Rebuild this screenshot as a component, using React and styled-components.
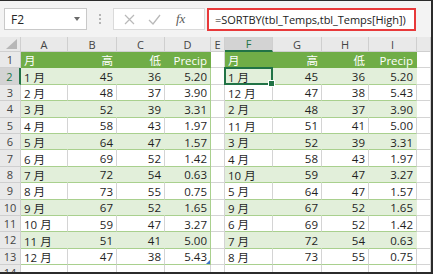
import styled, { createGlobalStyle, css } from 'styled-components';

const GlobalStyle = createGlobalStyle`
  html, body {
    margin: 0;
    padding: 0;
    background: #ffffff;
  }
  * { box-sizing: border-box; }
`;

const GREEN = '#70ad47';
const BAND = '#e2efda';
const TABLE_LINE = '#a9d08e';
const GRID = '#d4d4d4';
const HEAD_BG = '#e9e9e9';
const HEAD_LINE = '#cfcfcf';
const SELECT = '#217346';

const Frame = styled.div`
  width: 433px;
  height: 274px;
  border-top: 1px solid #2b2b2b;
  border-right: 2px solid #2b2b2b;
  border-bottom: 2px solid #2b2b2b;
  overflow: hidden;
  display: flex;
  flex-direction: column;
  font-family: "Open Sans", "Noto Sans CJK SC", sans-serif;
  background: #fff;
`;

const Toolbar = styled.div`
  height: 36px;
  flex: none;
  background: #f3f3f3;
  display: flex;
  align-items: flex-start;
  padding: 7px 0 0 4px;
`;

const NameBox = styled.div`
  width: 83px;
  height: 22px;
  background: #fff;
  border: 1px solid #c9c9c9;
  display: flex;
  align-items: center;
  justify-content: space-between;
  padding: 0 6px 0 6px;
  font-size: 12px;
  color: #262626;
`;

const Caret = styled.span`
  width: 0;
  height: 0;
  border-left: 3.5px solid transparent;
  border-right: 3.5px solid transparent;
  border-top: 4px solid #6a6a6a;
`;

const Grip = styled.div`
  width: 26px;
  height: 22px;
  display: flex;
  flex-direction: column;
  align-items: center;
  justify-content: center;
  gap: 2px;
  & span {
    width: 2px;
    height: 2px;
    background: #b5b5b5;
  }
`;

const FnBox = styled.div`
  width: 92px;
  height: 22px;
  background: #fff;
  border: 1px solid #dadada;
  display: flex;
  align-items: center;
  padding-left: 10px;
  gap: 13px;
  color: #b9b9b9;
`;

const Fx = styled.span`
  margin-left: 2px;
  font-family: "Liberation Serif", serif;
  font-style: italic;
  font-size: 13px;
  color: #5a5a5a;
`;

const FormulaBox = styled.div`
  margin-left: 2px;
  width: 209px;
  height: 23px;
  background: #fff;
  border: 2px solid #e8393a;
  display: flex;
  align-items: center;
  padding-left: 6px;
  font-size: 11px;
  letter-spacing: -0.05px;
  color: #222;
  white-space: nowrap;
`;

const Sheet = styled.div`
  flex: 1;
  display: grid;
  grid-template-columns: 21px 47px 49px 48px 46px 14px 48px 49px 47px 48px 1fr;
  grid-template-rows: 15px repeat(13, 16.4px) 1fr;
  font-size: 11.5px;
  color: #1f1f1f;
`;

const place = css`
  grid-column: ${p => p.$col};
  grid-row: ${p => p.$row};
`;

const ColHead = styled.div`
  ${place};
  background: ${p => (p.$active ? '#d3d3d3' : HEAD_BG)};
  color: ${p => (p.$active ? SELECT : '#444')};
  border-right: 1px solid ${HEAD_LINE};
  border-bottom: ${p => (p.$active ? `2px solid ${SELECT}` : `1px solid ${HEAD_LINE}`)};
  display: flex;
  align-items: center;
  justify-content: center;
  font-size: 11px;
`;

const Corner = styled.div`
  ${place};
  background: ${HEAD_BG};
  border-right: 1px solid ${HEAD_LINE};
  border-bottom: 1px solid ${HEAD_LINE};
  display: flex;
  align-items: flex-end;
  justify-content: flex-end;
  padding: 0 3px 2px 0;
  & span {
    width: 0;
    height: 0;
    border-left: 11px solid transparent;
    border-bottom: 10px solid #b7b7b7;
  }
`;

const RowHead = styled.div`
  ${place};
  background: ${p => (p.$active ? '#d3d3d3' : HEAD_BG)};
  color: ${p => (p.$active ? SELECT : '#444')};
  border-right: ${p => (p.$active ? `2px solid ${SELECT}` : `1px solid ${HEAD_LINE}`)};
  border-bottom: 1px solid ${HEAD_LINE};
  display: flex;
  align-items: center;
  justify-content: center;
  font-size: 11px;
`;

const fills = {
  head: { bg: GREEN, right: GREEN, bottom: GREEN, color: '#fff' },
  band: { bg: BAND, right: BAND, bottom: TABLE_LINE, color: '#1f1f1f' },
  plain: { bg: '#fff', right: GRID, bottom: TABLE_LINE, color: '#1f1f1f' },
  empty: { bg: '#fff', right: GRID, bottom: GRID, color: '#1f1f1f' },
};

const Cell = styled.div`
  ${place};
  position: relative;
  background: ${p => fills[p.$fill].bg};
  color: ${p => fills[p.$fill].color};
  border-right: 1px solid ${p => (p.$edge ? TABLE_LINE : fills[p.$fill].right)};
  border-bottom: 1px solid ${p => fills[p.$fill].bottom};
  display: flex;
  align-items: center;
  justify-content: ${p => (p.$right ? 'flex-end' : 'flex-start')};
  padding: 1px 3px 0 3px;
  white-space: nowrap;
  ${p => p.$resize && css`
    &::after {
      content: '';
      position: absolute;
      right: 0;
      bottom: 0;
      border-left: 4px solid transparent;
      border-bottom: 4px solid #3b73c4;
    }
  `}
`;

const Spill = styled.div`
  ${place};
  border: 1px solid #6f9fdc;
  pointer-events: none;
`;

const Selection = styled.div`
  ${place};
  position: relative;
  border: 2px solid ${SELECT};
  margin: -1px 0 0 -1px;
  pointer-events: none;
  &::after {
    content: '';
    position: absolute;
    right: -4px;
    bottom: -4px;
    width: 5px;
    height: 5px;
    background: ${SELECT};
    border: 1px solid #fff;
  }
`;

const rows = [
  ['1 月', 45, 36, '5.20'],
  ['2 月', 48, 37, '3.90'],
  ['3 月', 52, 39, '3.31'],
  ['4 月', 58, 43, '1.97'],
  ['5 月', 64, 47, '1.57'],
  ['6 月', 69, 52, '1.42'],
  ['7 月', 72, 54, '0.63'],
  ['8 月', 73, 55, '0.75'],
  ['9 月', 67, 52, '1.65'],
  ['10 月', 59, 47, '3.27'],
  ['11 月', 51, 41, '5.00'],
  ['12 月', 47, 38, '5.43'],
];

const sorted = [...rows].sort((a, b) => a[1] - b[1]);
const header = ['月', '高', '低', 'Precip'];
const letters = ['A', 'B', 'C', 'D', 'E', 'F', 'G', 'H', 'I'];

const TableBlock = ({ data, start, edgeRight }) => (
  <>
    {header.map((h, i) => (
      <Cell key={'h' + i} $row={2} $col={start + i} $fill="head" $right={i > 0}>{h}</Cell>
    ))}
    {data.map((r, ri) =>
      r.map((v, ci) => (
        <Cell
          key={ri + '-' + ci}
          $row={ri + 3}
          $col={start + ci}
          $fill={ri % 2 === 0 ? 'band' : 'plain'}
          $right={ci > 0}
          $edge={edgeRight && ci === 3}
          $resize={edgeRight && ci === 3 && ri === data.length - 1}
        >
          {v}
        </Cell>
      ))
    )}
  </>
);

export default function App() {
  return (
    <Frame>
      <GlobalStyle />
      <Toolbar>
        <NameBox>F2<Caret /></NameBox>
        <Grip><span /><span /><span /></Grip>
        <FnBox>
          <svg width="11" height="11" viewBox="0 0 11 11"><path d="M1 1l9 9M10 1l-9 9" stroke="currentColor" strokeWidth="1.2" /></svg>
          <svg width="13" height="11" viewBox="0 0 13 11"><path d="M1 6l4 4 7-9" stroke="currentColor" strokeWidth="1.3" fill="none" /></svg>
          <Fx>fx</Fx>
        </FnBox>
        <FormulaBox>=SORTBY(tbl_Temps,tbl_Temps[High])</FormulaBox>
      </Toolbar>
      <Sheet>
        <Corner $row={1} $col={1}><span /></Corner>
        {letters.map((l, i) => (
          <ColHead key={l} $row={1} $col={i + 2} $active={l === 'F'}>{l}</ColHead>
        ))}
        <ColHead $row={1} $col={11} />
        {Array.from({ length: 14 }, (_, i) => (
          <RowHead key={i} $row={i + 2} $col={1} $active={i === 1}>{i + 1}</RowHead>
        ))}
        <TableBlock data={rows} start={2} edgeRight />
        <TableBlock data={sorted} start={7} />
        {Array.from({ length: 13 }, (_, i) => (
          <Cell key={'e' + i} $row={i + 2} $col={6} $fill="empty" />
        ))}
        {Array.from({ length: 13 }, (_, i) => (
          <Cell key={'x' + i} $row={i + 2} $col={11} $fill="empty" />
        ))}
        {Array.from({ length: 10 }, (_, i) => (
          <Cell key={'b' + i} $row={15} $col={i + 2} $fill="empty" />
        ))}
        <Spill $row="3 / 15" $col="7 / 11" />
        <Selection $row={3} $col={7} />
      </Sheet>
    </Frame>
  );
}
